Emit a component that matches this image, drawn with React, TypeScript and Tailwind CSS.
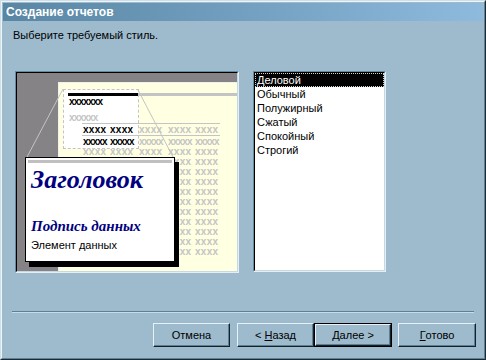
const STYLES = ['Деловой', 'Обычный', 'Полужирный', 'Сжатый', 'Спокойный', 'Строгий'] as const

const SAMPLE_ROWS = Array.from({ length: 11 }, (_, i) => i)

const COLS = 'grid grid-cols-[27px_29px_29px_27px_26px] pl-[1px] overflow-hidden'

function Hatch({ text, gray = false }: { text: string; gray?: boolean }) {
  const tight = text.length > 4 ? 'tracking-[-0.8px]' : 'tracking-[0.3px]'
  return (
    <span
      className={`block h-[10px] overflow-hidden whitespace-nowrap font-bold text-[10px] leading-[10px] ${tight} ${
        gray ? 'text-[#c4c4c4]' : 'text-black'
      }`}
    >
      {text}
    </span>
  )
}

function Sunken({ className, children }: { className: string; children: React.ReactNode }) {
  return (
    <div className={`border border-t-[#668aa0] border-l-[#668aa0] border-r-[#e4eef4] border-b-[#e4eef4] ${className}`}>
      <div className="h-full border border-t-black border-l-black border-r-[#c6d8e3] border-b-[#c6d8e3]">
        {children}
      </div>
    </div>
  )
}

function Preview() {
  return (
    <Sunken className="h-[202px] w-[224px]">
      <div className="relative h-full bg-[#868386] pl-[41px] pt-[9px]">
        {/* the report page */}
        <div className="relative h-full border-l border-t border-[#f2f2ea] bg-[#ffffe1] font-['Liberation_Sans',sans-serif]">
          <div className="absolute left-[4px] top-[6px] h-[60px] w-[76px] border border-dashed border-[#c4c4c4] bg-white" />
          <div className="relative">
            <div className="ml-[9px] mt-[10px] flex items-start">
              <div className="h-[3px] w-[70px] bg-black" />
              <div className="h-[3px] flex-1 bg-[#c4c4c4]" />
            </div>
            <div className="ml-[10px] mt-[1px] w-[44px]">
              <Hatch text="xxxxxxx" />
            </div>
            <div className="ml-[10px] mt-[6px] w-[36px]">
              <Hatch text="xxxxxx" gray />
            </div>
            <div className="ml-[23px] w-[138px] border-t border-[#c4c4c4]">
              <div className={`${COLS} mt-[1px]`}>
                <Hatch text="xxxx" />
                <Hatch text="xxxx" />
                <Hatch text="xxxx" gray />
                <Hatch text="xxxx" gray />
                <Hatch text="xxxx" gray />
              </div>
              <div className="border-t border-[#c4c4c4]" />
              <div className={`${COLS} mt-[1px]`}>
                <Hatch text="xxxxx" />
                <Hatch text="xxxxx" />
                <Hatch text="xxxxx" gray />
                <Hatch text="xxxxx" gray />
                <Hatch text="xxxxx" gray />
              </div>
              {SAMPLE_ROWS.map((r) => (
                <div key={r} className={COLS}>
                  <Hatch text="xxxx" gray />
                  <Hatch text="xxxx" gray />
                  <Hatch text="xxxx" gray />
                  <Hatch text="xxxx" gray />
                  <Hatch text="xxxx" gray />
                </div>
              ))}
            </div>
          </div>
        </div>

        {/* zoom connector lines */}
        <svg className="pointer-events-none absolute left-0 top-0" width="220" height="198">
          <line x1="10" y1="84" x2="46" y2="16" stroke="#c4c4c4" strokeWidth="1" />
          <line x1="156" y1="84" x2="121" y2="17" stroke="#c4c4c4" strokeWidth="1" />
        </svg>

        {/* zoomed callout */}
        <div className="absolute left-[8px] top-[84px] h-[105px] w-[150px] border border-black bg-white shadow-[4px_5px_0_#000]">
          <div className="mx-[2px] mt-[2px] h-[3px] bg-[#c0c0c0]" />
          <div className="mt-[4px] pl-[5px] font-['Liberation_Serif',serif] text-[26px] font-bold italic leading-none text-[#000080]">
            Заголовок
          </div>
          <div className="mt-[26px] pl-[5px] font-['Liberation_Serif',serif] text-[15px] font-bold italic leading-none text-[#000080]">
            Подпись данных
          </div>
          <div className="mt-[5px] pl-[5px] text-[11px] leading-[13px] text-black">Элемент данных</div>
        </div>
      </div>
    </Sunken>
  )
}

function StyleList() {
  return (
    <Sunken className="h-[201px] w-[133px]">
      <div className="h-full bg-white">
        {STYLES.map((s, i) => (
          <div
            key={s}
            className={
              i === 0
                ? 'h-[14px] border border-dotted border-[#d0d0d0] bg-black pl-[1px] text-[11px] leading-[12px] text-white'
                : 'h-[14px] pl-[2px] text-[11px] leading-[14px] text-black'
            }
          >
            {s}
          </div>
        ))}
      </div>
    </Sunken>
  )
}

function Button({ children, isDefault = false, className = '' }: { children: React.ReactNode; isDefault?: boolean; className?: string }) {
  const face = (
    <div className="flex h-full items-center justify-center border border-t-[#e6f0f6] border-l-[#e6f0f6] border-r-[#16222a] border-b-[#16222a] shadow-[inset_-1px_-1px_0_#5d7f94] text-[11px] text-black">
      {children}
    </div>
  )
  return (
    <div className={`h-[24px] ${className}`}>
      {isDefault ? <div className="h-full border border-black">{face}</div> : face}
    </div>
  )
}

export default function App() {
  return (
    <div className="h-[360px] w-[486px] border border-t-[#cddfe9] border-l-[#cddfe9] border-r-[#1d2a32] border-b-[#1d2a32] bg-[#9dbbcd] font-['Liberation_Sans',sans-serif]">
      <div className="h-full border border-t-[#eef5f9] border-l-[#eef5f9] border-r-[#5f8197] border-b-[#5f8197] p-[1px]">
        <div className="flex h-[18px] items-center bg-linear-to-r from-[#5886a3] to-[#8ebade] pl-[3px] text-[12px] font-bold text-white">
          Создание отчетов
        </div>

        <p className="mt-[8px] pl-[10px] text-[11px] leading-[13px] text-black">Выберите требуемый стиль.</p>

        <div className="mt-[29px] flex items-start gap-[14px] pl-[12px]">
          <Preview />
          <StyleList />
        </div>

        <div className="mx-[9px] mt-[38px] border-t border-b border-t-[#5a809a] border-b-[#c9dbe6]" />

        <div className="mt-[10px] flex justify-end pr-[7px]">
          <Button className="mr-[7px] w-[77px]">Отмена</Button>
          <Button className="w-[77px]">
            &lt;&nbsp;<span className="underline">Н</span>азад
          </Button>
          <Button isDefault className="mr-[6px] w-[78px]">
            <span className="underline">Д</span>алее&nbsp;&gt;
          </Button>
          <Button className="w-[78px]">
            <span className="underline">Г</span>отово
          </Button>
        </div>
      </div>
    </div>
  )
}
